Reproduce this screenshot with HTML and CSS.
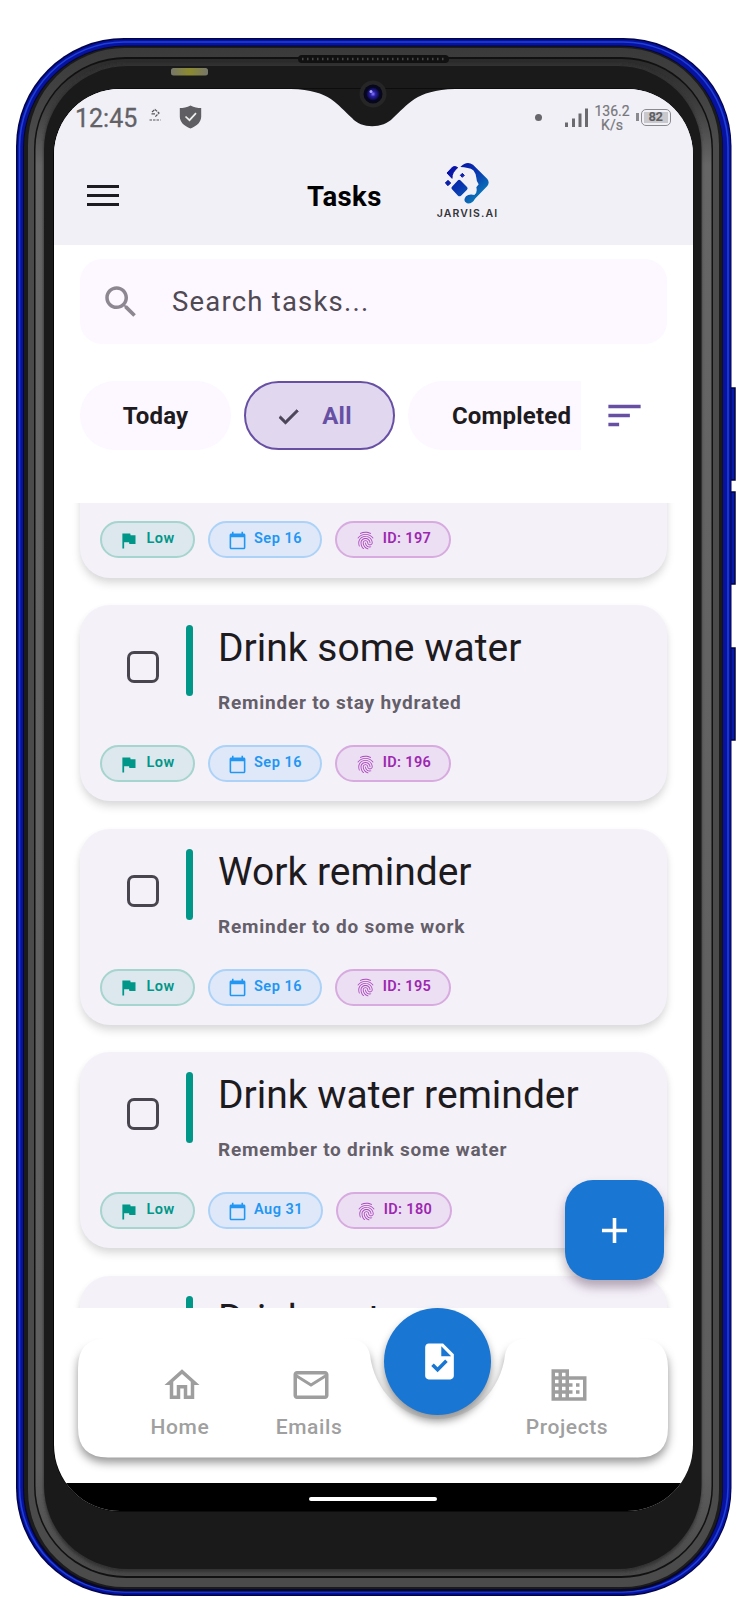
FILE: index.html
```html
<!DOCTYPE html>
<html lang="en">
<head>
<meta charset="utf-8">
<title>Tasks</title>
<link rel="stylesheet" href="styles.css">
</head>
<body>
<svg class="defs" width="0" height="0" aria-hidden="true">
  <symbol id="flag" viewBox="0 0 24 24"><path d="M14.4 6L14 4H5v17h2v-7h5.600l.4 2h7V6z"/></symbol>
  <symbol id="calendar" viewBox="0 0 24 24"><path d="M20 3h-1V1h-2v2H7V1H5v2H4c-1.100 0-2 .9-2 2v16c0 1.100.9 2 2 2h16c1.100 0 2-.9 2-2V5c0-1.100-.9-2-2-2zm0 18H4V8h16v13z"/></symbol>
  <symbol id="finger" viewBox="0 0 24 24"><path d="M17.81 4.470c-.08 0-.16-.02-.23-.06C15.660 3.420 14 3 12.010 3c-1.980 0-3.860.47-5.570 1.410-.24.13-.54.04-.68-.2-.13-.24-.04-.55.2-.68C7.820 2.520 9.860 2 12.010 2c2.130 0 3.990.47 6.030 1.520.25.13.34.43.21.67-.09.18-.26.28-.44.28zM3.500 9.720c-.1 0-.2-.03-.29-.09-.23-.16-.28-.47-.12-.7.99-1.400 2.250-2.500 3.750-3.270C9.980 4.040 14 4.030 17.150 5.650c1.500.77 2.760 1.860 3.750 3.250.16.22.11.54-.12.7-.23.16-.54.11-.7-.12-.9-1.260-2.040-2.250-3.390-2.940-2.870-1.470-6.540-1.470-9.400.01-1.360.7-2.500 1.700-3.400 2.960-.08.14-.23.21-.39.21zm6.250 12.070c-.13 0-.26-.05-.35-.15-.87-.87-1.340-1.430-2.010-2.640-.69-1.230-1.050-2.730-1.050-4.340 0-2.970 2.540-5.390 5.660-5.390s5.660 2.420 5.660 5.390c0 .28-.22.5-.5.5s-.5-.22-.5-.5c0-2.420-2.090-4.390-4.660-4.390-2.570 0-4.660 1.970-4.660 4.390 0 1.440.32 2.770.93 3.850.64 1.150 1.080 1.640 1.850 2.420.19.2.19.51 0 .71-.11.1-.24.15-.37.15zm7.170-1.850c-1.190 0-2.240-.3-3.100-.89-1.490-1.010-2.380-2.650-2.380-4.390 0-.28.22-.5.5-.5s.5.22.5.5c0 1.410.72 2.740 1.940 3.560.71.48 1.540.71 2.540.71.24 0 .64-.03 1.040-.1.27-.05.53.13.58.41.05.27-.13.53-.41.58-.57.11-1.070.12-1.210.12zM14.910 22c-.04 0-.09-.01-.13-.02-1.590-.44-2.630-1.030-3.720-2.100-1.400-1.390-2.170-3.240-2.170-5.220 0-1.620 1.380-2.940 3.080-2.940 1.700 0 3.080 1.320 3.080 2.940 0 1.070.93 1.940 2.080 1.940s2.080-.87 2.080-1.940c0-3.770-3.250-6.830-7.250-6.830-2.840 0-5.440 1.580-6.610 4.030-.39.81-.59 1.760-.59 2.800 0 .78.07 2.010.67 3.610.1.26-.03.55-.29.64-.26.1-.55-.04-.64-.29-.49-1.310-.73-2.610-.73-3.960 0-1.200.23-2.290.68-3.240 1.330-2.790 4.280-4.600 7.510-4.600 4.550 0 8.250 3.510 8.250 7.830 0 1.620-1.380 2.940-3.080 2.940s-3.080-1.320-3.080-2.940c0-1.070-.93-1.940-2.080-1.940s-2.080.87-2.080 1.940c0 1.710.66 3.310 1.870 4.510.95.94 1.860 1.460 3.270 1.850.27.07.42.35.35.61-.05.23-.26.38-.47.38z"/></symbol>
</svg>

<div class="phone">
  <svg class="frame" width="746" height="1600" viewBox="0 0 746 1600" aria-hidden="true">
    <defs>
      <linearGradient id="rimIn" x1="0" y1="0" x2="0" y2="1"><stop offset="0" stop-color="#2b2b2b"/><stop offset=".03" stop-color="#3d3d3d"/><stop offset=".07" stop-color="#666"/><stop offset=".93" stop-color="#5e5e5e"/><stop offset="1" stop-color="#484848"/></linearGradient>
      <linearGradient id="rimOut" x1="0" y1="0" x2="0" y2="1"><stop offset="0" stop-color="#3a3a3a"/><stop offset=".06" stop-color="#4b4b4b"/><stop offset="1" stop-color="#4b4b4b"/></linearGradient>
      <radialGradient id="lens"><stop offset="0" stop-color="#8a7cff"/><stop offset=".4" stop-color="#2a20a8"/><stop offset="1" stop-color="#08083a"/></radialGradient>
      <linearGradient id="flash"><stop offset="0" stop-color="#77776c"/><stop offset=".5" stop-color="#8c8a2e"/><stop offset="1" stop-color="#77776c"/></linearGradient>
      <filter id="soft"><feGaussianBlur stdDeviation="1.500"/></filter>
    </defs>
    <path d="M727 388h8v92h-8zM727 492h8v92h-8zM727 648h8v92h-8z" fill="#0719a8" stroke="#02043c" stroke-width="1.500"/>
    <rect x="16" y="38" width="715.500" height="1558" rx="108" fill="#02044a"/>
    <rect x="17.500" y="39.500" width="713" height="1555" rx="107" fill="#0712a0"/>
    <rect x="19.500" y="42" width="708.500" height="1550" rx="105" fill="none" stroke="#1f40d6" stroke-width="1.600"/>
    <rect x="23" y="45.500" width="700" height="1546" rx="102" fill="#07072c"/>
    <rect x="24" y="46.500" width="698.500" height="1542.500" rx="101" fill="#1b1b1b"/>
    <rect x="28" y="48" width="691" height="1539" rx="97" fill="url(#rimOut)"/>
    <rect x="34" y="57" width="679" height="1521" rx="92" fill="#111"/>
    <rect x="35.500" y="59" width="676" height="1517" rx="90" fill="url(#rimIn)"/>
    <rect x="43.500" y="64" width="658" height="1508" rx="84" fill="#303030" filter="url(#soft)"/>
    <rect x="44" y="66" width="657.500" height="1503" rx="84" fill="#1a1a1a"/>
    <rect x="298" y="55" width="151" height="8" rx="4" fill="#111"/>
    <path d="M302 59h144" stroke="#484848" stroke-width="2.500" stroke-dasharray="1.500 3.500"/>
    <rect x="171" y="68" width="37" height="7.500" rx="2.500" fill="url(#flash)"/>
    <rect x="53.200" y="88.500" width="640" height="1423" rx="67" fill="#000"/>
  </svg>

  <div class="screen">
    <header class="header">
      <div class="status">
        <span class="clock">12:45</span>
        <svg class="mini" width="12" height="14" viewBox="0 0 12 14" fill="none" stroke="#55555a" stroke-width="1.200"><path d="M3 4l3-2.500L10 5 6 9" stroke-dasharray="3 .8"/><path d="M2.500 5.800h3.500"/><path d="M.5 12h11" stroke-dasharray="2.500 1"/></svg>
        <svg class="shield" width="23" height="24" viewBox="0 0 23 24"><path d="M11.500 0.500C8 2.500 4 3 .8 3v8.500c0 5.500 4.200 9.500 10.700 12 6.500-2.500 10.700-6.500 10.700-12V3C19 3 15 2.500 11.500.5z" fill="#5f5f63"/><path d="M6.500 11.500l4 3.700 6.500-7" fill="none" stroke="#eee" stroke-width="1.700"/></svg>
        <span class="dot"></span>
        <svg class="signal" width="24" height="20" viewBox="0 0 24 20" fill="#6b6b6f"><path d="M0 14.500h3V19H0zM7 10.500h3V19H7zM13.500 5.500h3V19h-3zM20 .5h3V19h-3z"/></svg>
        <span class="speed">136.2<br>K/s</span>
        <span class="battery"><i class="nub"></i><span class="cell">82</span></span>
      </div>
      <div class="appbar">
        <span class="burger"><i></i><i></i><i></i></span>
        <h1 class="title">Tasks</h1>
        <div class="logo">
          <svg width="46" height="43" viewBox="75 35 138 129">
            <defs><linearGradient id="brand" gradientUnits="userSpaceOnUse" x1="100" y1="50" x2="190" y2="150"><stop offset="0" stop-color="#0810a6"/><stop offset=".45" stop-color="#0835b0"/><stop offset="1" stop-color="#0b86b8"/></linearGradient></defs>
            <g fill="url(#brand)"><path d="M124 50Q143 30 162 43L205 86Q213 97 205 107L168 145Q160 161 144 159Q130 152 141 138Q150 130 166 134Q176 128 172 111L179 102Q172 93 172 82Q168 54 146 53Q135 50 124 50z"/>
            <path d="M124 90l20 20q4 4 0 8l-18 18q-5 4-9 0l-18-19q-4-4 0-8l18-19q3-3 7 0z"/>
            <path d="M84 68l17-18q8-4 15 2Q98 66 99 84z" stroke="#0b10a8" stroke-width="3" stroke-linejoin="round"/><path d="M87 90l8 8-8 8-8-8z" stroke="#0b18a8" stroke-width="3" stroke-linejoin="round"/><path d="M130 69l6 6-6 6-6-6z" stroke="#0b18a8" stroke-width="3" stroke-linejoin="round"/></g>
          </svg>
          <span class="brand">JARVIS.AI</span>
        </div>
      </div>
    </header>

    <div class="search">
      <svg width="42" height="42" viewBox="0 0 24 24" fill="#8d8791"><path d="M15.500 14h-.79l-.28-.27C15.410 12.590 16 11.110 16 9.500 16 5.910 13.090 3 9.500 3S3 5.910 3 9.500 5.910 16 9.500 16c1.610 0 3.090-.59 4.230-1.570l.27.28v.79l5 4.990L20.490 19l-4.990-5zm-6 0C7.010 14 5 11.990 5 9.500S7.010 5 9.500 5 14 7.010 14 9.500 11.990 14 9.500 14z"/></svg>
      <span>Search tasks...</span>
    </div>

    <div class="filters">
      <div class="chips">
        <span class="chip">Today</span>
        <span class="chip selected"><svg width="28" height="28" viewBox="0 0 24 24" fill="#4a4458" stroke="#4a4458" stroke-width=".7"><path d="M9 16.170L4.830 12l-1.420 1.410L9 19 20 8l-1.410-1.410z"/></svg>All</span>
        <span class="chip last">Completed</span>
      </div>
      <svg class="sort" width="43" height="43" viewBox="0 0 24 24" fill="#6750a4"><path d="M3 18h6v-2H3v2zM3 6v2h18V6H3zm0 7h12v-2H3v2z"/></svg>
    </div>

    <main class="list">
      <article class="card first">
        <div class="tags">
          <span class="tag low"><svg width="21" height="21"><use href="#flag"/></svg>Low</span>
          <span class="tag date"><svg width="19" height="19"><use href="#calendar"/></svg>Sep 16</span>
          <span class="tag id"><svg width="21" height="21"><use href="#finger"/></svg>ID: 197</span>
        </div>
      </article>
      <article class="card">
        <div class="top"><span class="box"></span><span class="bar"></span><div><h2>Drink some water</h2><p>Reminder to stay hydrated</p></div></div>
        <div class="tags">
          <span class="tag low"><svg width="21" height="21"><use href="#flag"/></svg>Low</span>
          <span class="tag date"><svg width="19" height="19"><use href="#calendar"/></svg>Sep 16</span>
          <span class="tag id"><svg width="21" height="21"><use href="#finger"/></svg>ID: 196</span>
        </div>
      </article>
      <article class="card">
        <div class="top"><span class="box"></span><span class="bar"></span><div><h2>Work reminder</h2><p>Reminder to do some work</p></div></div>
        <div class="tags">
          <span class="tag low"><svg width="21" height="21"><use href="#flag"/></svg>Low</span>
          <span class="tag date"><svg width="19" height="19"><use href="#calendar"/></svg>Sep 16</span>
          <span class="tag id"><svg width="21" height="21"><use href="#finger"/></svg>ID: 195</span>
        </div>
      </article>
      <article class="card">
        <div class="top"><span class="box"></span><span class="bar"></span><div><h2>Drink water reminder</h2><p>Remember to drink some water</p></div></div>
        <div class="tags">
          <span class="tag low"><svg width="21" height="21"><use href="#flag"/></svg>Low</span>
          <span class="tag date wide"><svg width="19" height="19"><use href="#calendar"/></svg>Aug 31</span>
          <span class="tag id"><svg width="21" height="21"><use href="#finger"/></svg>ID: 180</span>
        </div>
      </article>
      <article class="card">
        <div class="top"><span class="bar offset"></span><div><h2>Drink water</h2></div></div>
      </article>
    </main>

    <nav class="nav">
      <svg class="navshape" width="639" height="175" viewBox="0 0 639 175">
        <defs><linearGradient id="fade" x1="0" y1="0" x2="0" y2="1"><stop offset="0" stop-color="#fff"/><stop offset="1" stop-color="#fff" stop-opacity="0"/></linearGradient></defs>
        <path class="bar-shape" d="M54 30H290C306 30 314 36 316 47C320 82 348 111 383 111C419 111 447 82 451 47C453 36 461 30 478 30H584Q614 30 614 60V119.500Q614 149.500 584 149.500H54Q24 149.500 24 119.500V60Q24 30 54 30z"/>
        <rect width="639" height="30" fill="#fff"/><rect y="28" width="639" height="24" fill="url(#fade)"/>
      </svg>
      <div class="items">
        <a class="item home"><svg width="42" height="42" viewBox="0 0 24 24"><path d="M12 5.690l5 4.500V18h-2v-6H9v6H7v-7.810l5-4.500M12 3L2 12h3v8h6v-6h2v6h6v-8h3L12 3z"/></svg>Home</a>
        <a class="item emails"><svg width="42" height="42" viewBox="0 0 24 24"><path d="M22 6c0-1.100-.9-2-2-2H4c-1.100 0-2 .9-2 2v12c0 1.100.9 2 2 2h16c1.100 0 2-.9 2-2V6zm-2 0l-8 5-8-5h16zm0 12H4V8l8 5 8-5v10z"/></svg>Emails</a>
        <a class="item projects"><svg width="42" height="42" viewBox="0 0 24 24"><path d="M12 7V3H2v18h20V7H12zM6 19H4v-2h2v2zm0-4H4v-2h2v2zm0-4H4V9h2v2zm0-4H4V5h2v2zm4 12H8v-2h2v2zm0-4H8v-2h2v2zm0-4H8V9h2v2zm0-4H8V5h2v2zm10 12h-8v-2h2v-2h-2v-2h2v-2h-2V9h8v10zm-2-8h-2v2h2v-2zm0 4h-2v2h2v-2z"/></svg>Projects</a>
      </div>
      <span class="active"><svg width="43" height="43" viewBox="0 0 24 24" fill="#fff"><path d="M14 2H6c-1.100 0-1.990.9-1.990 2L4 20c0 1.100.89 2 1.990 2H18c1.100 0 2-.9 2-2V8l-6-6zm-3.060 16L7.400 14.460l1.410-1.410 2.120 2.120 4.240-4.240 1.410 1.410L10.940 18zM13 9V3.500L18.500 9H13z"/></svg></span>
    </nav>
    <div class="gesture"><i></i></div>

    <span class="fab"><svg width="43" height="43" viewBox="0 0 24 24" fill="#fff"><path d="M19 13h-6v6h-2v-6H5v-2h6V5h2v6h6v2z"/></svg></span>
    <svg class="notch" width="180" height="40" viewBox="0 0 180 40">
      <path d="M14 0C54 1 60 16 75 29C84 40 106 40 116 29C131 16 138 1 178 0z" transform="translate(-6)" fill="#1a1a1a"/>
    </svg>
  </div>
  <svg class="camera" width="36" height="36" viewBox="0 0 36 36"><circle cx="18" cy="18" r="13.500" fill="#262626"/><circle cx="18" cy="18" r="9.500" fill="#06061c"/><circle cx="18" cy="18" r="6.500" fill="url(#lens)"/><circle cx="16" cy="15.500" r="1.500" fill="#a9a0ff"/></svg>
</div>
</body>
</html>
```

FILE: styles.css
```css
* { box-sizing: border-box; }
body { margin: 0; background: #fff; font-family: Roboto, "Liberation Sans", sans-serif; }
.defs { position: absolute; }
.phone { position: relative; width: 746px; height: 1600px; padding: 89px 53px 0 54px; overflow: hidden; }
.frame { position: absolute; left: 0; top: 0; }
.camera { position: absolute; left: 355px; top: 76px; }
.screen { position: relative; width: 639px; height: 1422px; border-radius: 66px; overflow: hidden; background: #fff; display: flex; flex-direction: column; }
.notch { position: absolute; left: 229px; top: 0; }

.header { height: 156px; flex: none; background: #f1f0f7; }
.status { height: 58px; display: flex; align-items: center; padding-left: 21px; color: #626266; }
.clock { font-size: 25px; width: 64px; letter-spacing: 0; margin-top: 1px; -webkit-text-stroke: .3px #626266; }
.mini { margin: -6px 0 0 10px; }
.shield { margin: -2px 0 0 18px; }
.dot { width: 7px; height: 7px; border-radius: 50%; background: #68686c; margin: -2px 0 0 333px; }
.signal { margin-left: 23px; }
.speed { width: 40px; margin-left: 3px; text-align: center; font-size: 14px; line-height: 14.5px; color: #77777b; -webkit-text-stroke: .2px #77777b; }
.battery { display: flex; align-items: center; gap: 2px; margin-left: 4px; margin-top: -2px; }
.nub { width: 2.5px; height: 8px; background: #8a8a8e; }
.cell { width: 30px; height: 17px; border: 1.5px solid #8a8a8e; border-radius: 5px; background: linear-gradient(#c8c8cd, #c8c8cd) center / 24px 11px no-repeat; font-size: 13px; font-weight: 700; line-height: 14px; text-align: center; color: #5f5f63; letter-spacing: -.5px; }

.appbar { height: 98px; display: flex; align-items: flex-start; padding-left: 33px; }
.burger { width: 32px; display: flex; flex-direction: column; gap: 6px; margin-top: 38px; }
.burger i { height: 3px; background: #1c1b20; }
.title { margin: 31px 0 0 188px; width: 76px; font-size: 27.5px; line-height: 38px; font-weight: 700; color: #000; letter-spacing: .4px; }
.logo { margin: 15px 0 0 52px; width: 64px; display: flex; flex-direction: column; align-items: center; }
.brand { font: 600 10.5px/14px Inter, sans-serif; letter-spacing: 1.1px; color: #333338; margin-top: 2px; margin-right: -1px; }

.search { flex: none; margin: 14px 26px 0; height: 85px; border-radius: 22px; background: #fdf7ff; display: flex; align-items: center; gap: 30px; padding-left: 20px; font-size: 27.5px; letter-spacing: 1.2px; color: #4f4953; }

.filters { flex: none; margin-top: 37px; height: 69px; padding-left: 26px; display: flex; align-items: center; }
.chips { width: 501px; display: flex; gap: 13px; overflow: hidden; }
.chip { flex: none; height: 69px; width: 151px; border-radius: 35px; background: #fdf7ff; display: flex; align-items: center; justify-content: center; font-size: 24px; font-weight: 700; color: #1d1b20; letter-spacing: .2px; }
.selected { background: #e1d7ee; border: 2.5px solid #6750a4; color: #6750a4; gap: 19px; padding-right: 12px; }
.last { width: 207px; }
.sort { margin-left: 22px; }

.list { flex: none; height: 805px; margin-top: 53px; padding: 0 26px; overflow: hidden; display: flex; flex-direction: column; gap: 27.5px; }
.card { flex: none; height: 196px; border-radius: 30px; background: #f5f1f9; padding: 20px 20px 0; display: flex; flex-direction: column; box-shadow: 0 6px 8px rgba(0,0,0,.12), 0 2px 6px rgba(0,0,0,.04); }
.first { margin-top: -121.5px; justify-content: flex-end; padding-bottom: 19.5px; }
.top { display: flex; align-items: flex-start; height: 120px; padding-left: 27px; }
.box { width: 32px; height: 32px; border: 3px solid #49454f; border-radius: 7px; margin: 26px 27px 0 0; }
.bar { width: 7px; height: 71px; border-radius: 4px; background: #009688; margin-right: 25px; }
.offset { margin-left: 59px; }
.card h2 { margin: 0; font-size: 39px; line-height: 47px; font-weight: 400; color: #1d1b20; white-space: nowrap; }
.card p { margin: 19px 0 0; font-size: 19px; line-height: 24px; font-weight: 700; letter-spacing: .77px; color: #645f69; white-space: nowrap; }
.tags { display: flex; gap: 13px; }
.tag { height: 37px; border-radius: 19px; border: 2px solid; display: flex; align-items: center; justify-content: center; gap: 7px; font-size: 14.5px; font-weight: 600; letter-spacing: .5px; line-height: 20px; padding-bottom: 1px; white-space: nowrap; }
.tag svg { fill: currentColor; position: relative; top: 1px; }
.low { width: 95px; color: #009688; background: #dce8ee; border-color: #a6d4ce; padding-right: 2px; }
.date { width: 114px; color: #2196f3; background: #dfe8f8; border-color: #acd3f7; }
.wide { width: 115px; }
.id { width: 116px; color: #9c27b0; background: #ecdef3; border-color: #d7abdf; letter-spacing: .35px; }
.id svg { opacity: .8; }

.nav { flex: none; height: 175px; position: relative; }
.navshape { position: absolute; left: 0; top: 0; }
.bar-shape { fill: #fff; filter: drop-shadow(0 5px 5px rgba(0,0,0,.42)); }
.items { position: relative; display: flex; padding: 56px 0 0 74px; }
.item { display: flex; flex-direction: column; align-items: center; color: #a0a0a0; font-size: 21px; font-weight: 500; letter-spacing: .6px; line-height: 28px; }
.item svg { fill: #9e9e9e; margin: 0 0 7px 3px; }
.home { width: 104px; }
.emails { width: 154px; }
.projects { width: 120px; margin-left: 121px; }
.active { position: absolute; left: 330px; top: 0; width: 107px; height: 107px; border-radius: 50%; background: #1976d2; display: flex; align-items: center; justify-content: center; padding-left: 3px; box-shadow: 0 6px 9px rgba(0,0,0,.42); }
.gesture { flex: none; height: 28px; background: #000; display: flex; justify-content: center; align-items: center; padding: 3px 2px 0 0; }
.gesture i { width: 128px; height: 4px; border-radius: 2px; background: #fff; }
.fab { position: absolute; left: 511px; top: 1091px; width: 99px; height: 100px; border-radius: 28px; background: #1976d2; display: flex; align-items: center; justify-content: center; box-shadow: 0 7px 11px rgba(50,20,50,.35); }
```
